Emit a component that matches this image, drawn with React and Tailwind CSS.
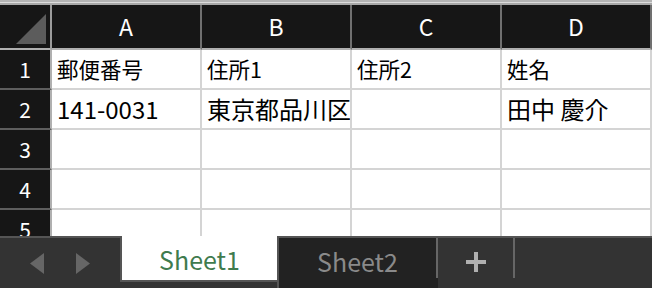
import React from "react";

const cols = ["A", "B", "C", "D"];
const rows = [
  { n: "1", size: "text-[21.5px]", cells: ["郵便番号", "住所1", "住所2", "姓名"] },
  { n: "2", size: "text-[24px]", cells: ["141-0031", "東京都品川区", "", "田中 慶介"] },
  { n: "3", size: "text-[21px]", cells: ["", "", "", ""] },
  { n: "4", size: "text-[21px]", cells: ["", "", "", ""] },
  { n: "5", size: "text-[21px]", cells: ["", "", "", ""] },
];

export default function App() {
  return (
    <div className="w-[652px] h-[288px] flex flex-col overflow-hidden bg-white font-['Noto_Sans_CJK_JP','Noto_Sans',sans-serif]">
      <div className="h-[5px] flex flex-col shrink-0">
        <div className="h-[2px] bg-[#b4b4b4]" />
        <div className="h-[1px] bg-[#dcdcdc]" />
        <div className="h-[2px] bg-[#a8a8a8]" />
      </div>

      <div className="flex-1 overflow-hidden flex flex-col">
        <div className="flex h-[45px] shrink-0">
          <div className="w-[52px] h-full bg-[#161616] border-r-2 border-b-2 border-r-[#9c9c9c] border-b-[#b0b0b0]">
            <svg width="50" height="43" viewBox="0 0 50 43">
              <polygon points="46,9 46,39 16,39" fill="#5c5c5c" />
            </svg>
          </div>
          {cols.map((c) => (
            <div
              key={c}
              className="w-[150px] h-full bg-[#161616] border-r-2 border-b-2 border-r-[#707070] border-b-[#b0b0b0] flex items-center justify-center text-white text-[23px] leading-none"
            >
              {c}
            </div>
          ))}
        </div>

        {rows.map((r) => (
          <div key={r.n} className="flex h-[40px] shrink-0">
            <div className="w-[52px] h-full bg-[#161616] border-r-2 border-b-2 border-r-[#b0b0b0] border-b-[#5e5e5e] flex items-center justify-center text-white text-[21px] leading-none">
              {r.n}
            </div>
            {r.cells.map((t, i) => (
              <div
                key={i}
                className={`w-[150px] h-full bg-white border-r-2 border-b-2 border-[#d4d4d4] flex items-center pl-[5px] overflow-hidden whitespace-nowrap text-black leading-none ${r.size}`}
              >
                {t}
              </div>
            ))}
          </div>
        ))}
      </div>

      <div className="h-[52px] shrink-0 flex bg-[#333333]">
        <div className="w-[120px] h-full border-t-2 border-[#555555] flex items-center">
          <svg width="120" height="22" viewBox="0 0 120 22" className="mt-[1px]">
            <polygon points="44,0 44,21 30,10.5" fill="#666666" />
            <polygon points="76,0 76,21 90,10.5" fill="#666666" />
          </svg>
        </div>
        <div className="w-[157px] h-[46px] bg-white border-l-2 border-b-2 border-[#555555] flex items-center justify-center text-[#3f7b4e] text-[25px] leading-none pt-[3px]">
          Sheet1
        </div>
        <div className="w-[161px] h-full bg-[#222222] border-t-2 border-l-2 border-[#555555] flex">
          <div className="flex-1 h-[46px] flex items-center justify-center text-[#8a8a8a] text-[25px] leading-none pt-[1px]">
            Sheet2
          </div>
          <div className="w-[2px] h-[40px] bg-[#666666]" />
        </div>
        <div className="w-[77px] h-full border-t-2 border-[#555555] flex">
          <div className="flex-1 h-full flex items-center justify-center">
            <svg width="20" height="20" viewBox="0 0 20 20" className="mb-[2px]">
              <rect x="8" y="0" width="4" height="20" fill="#b0b0b0" />
              <rect x="0" y="8" width="20" height="4" fill="#b0b0b0" />
            </svg>
          </div>
          <div className="w-[2px] h-[40px] bg-[#666666]" />
        </div>
        <div className="flex-1 h-full border-t-2 border-[#555555]" />
      </div>
    </div>
  );
}
